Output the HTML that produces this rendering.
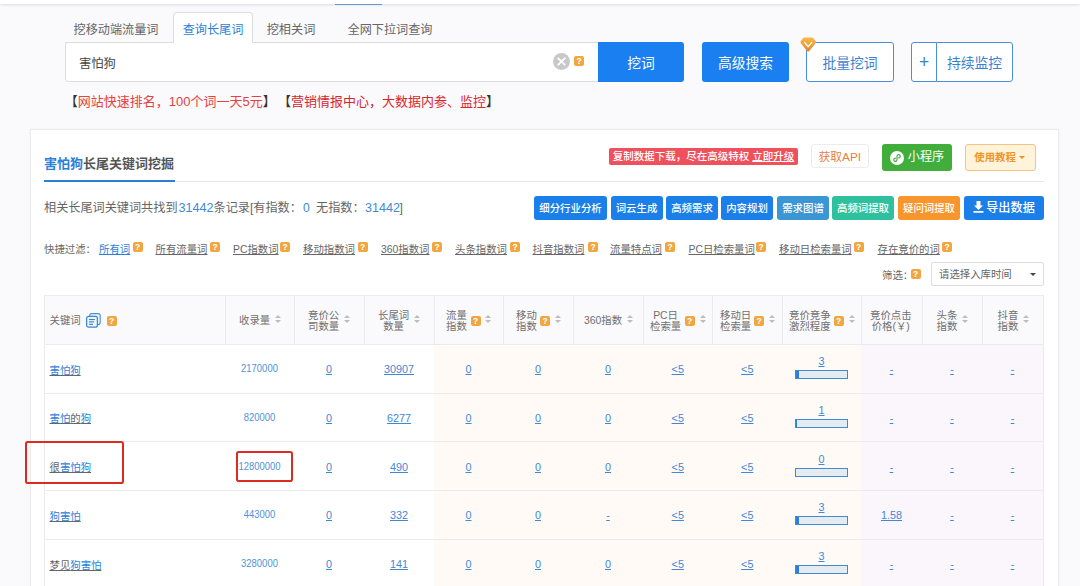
<!DOCTYPE html><html lang="zh-CN"><head><meta charset="utf-8"><title>害怕狗长尾关键词挖掘</title><style>
*{box-sizing:border-box;margin:0;padding:0}
html,body{width:1080px;height:586px;overflow:hidden;background:#faf9fb}
body{font-family:"Liberation Sans","Noto Sans CJK SC",sans-serif;color:#555;font-size:12.1px;position:relative}
.a{position:absolute;white-space:nowrap}
.c{text-align:center}
.q{position:absolute;width:10px;height:10px;border-radius:2px;background:#f1a640;color:#fff;font-size:8.5px;font-weight:bold;line-height:10px;text-align:center;font-family:"Liberation Sans",sans-serif}
.tab{position:absolute;top:12px;height:31px;line-height:36px;font-size:12.15px;color:#666;text-align:center}
.btn{position:absolute;border-radius:3px;text-align:center;white-space:nowrap}
.sb{position:absolute;top:196px;height:24px;line-height:25px;border-radius:3px;color:#fff;font-size:10.4px;text-align:center;font-weight:500}
.f{position:absolute;top:243px;height:13px;line-height:13px;font-size:10.4px;color:#666;text-decoration:underline}
.th{position:absolute;font-size:10.4px;line-height:11.5px;color:#707070;text-align:center}
.so{position:absolute;width:6.2px;height:8.9px;margin-left:.6px}
.so:before,.so:after{content:"";position:absolute;left:0;border-left:3.1px solid transparent;border-right:3.1px solid transparent}
.so:before{top:0;border-bottom:3.4px solid #bdbdbd}
.so:after{bottom:0;border-top:3.4px solid #bdbdbd}
.vl{position:absolute;top:295px;width:1px;background:#ebebeb}
.hl{position:absolute;left:44px;width:1000px;height:1px;background:#ebebeb}
.kw{position:absolute;left:49.5px;font-size:10.4px;line-height:14px;height:14px;color:#666;text-decoration:underline}
.kw b{font-weight:normal;color:#2b7fd9}
.n{position:absolute;font-size:10.8px;line-height:14px;height:14px;color:#3f88d4;text-align:center;text-decoration:underline;text-underline-offset:1.3px}
.n.nu{text-decoration:none;color:#4f93d8;font-size:10.7px;transform:scaleX(.885)}
.bar{position:absolute;left:795px;width:53px;height:9px;border:1px solid #3d8ad6;background:#e6ebf0}
.bar i{position:absolute;left:0;top:0;bottom:0;background:#2b7fd9}
.rb{position:absolute;border:2.4px solid #dc2b20;border-radius:2.8px}
</style></head><body>
<div class="a" style="left:0;top:0;width:1080px;height:4px;background:#fff;box-shadow:0 1px 3px rgba(0,0,0,.12)"></div>
<div class="a" style="left:335px;top:3.8px;width:46.5px;height:1.5px;background:#5f9ad8"></div>
<div class="a" style="left:65px;top:42px;width:533px;height:1px;background:#ddd"></div>
<div class="tab" style="left:65px;width:102px">挖移动端流量词</div>
<div class="tab" style="left:173px;width:80px;background:#fff;border:1px solid #ddd;border-bottom:none;border-radius:4px 4px 0 0;color:#2b7fd9;line-height:34px">查询长尾词</div>
<div class="tab" style="left:258px;width:66px">挖相关词</div>
<div class="tab" style="left:338px;width:104px">全网下拉词查询</div>
<div class="a" style="left:65px;top:42px;width:534px;height:40px;background:#fff;border:1px solid #ddd;border-radius:3px 0 0 3px"></div>
<div class="a" style="left:174px;top:42px;width:78px;height:1px;background:#fff"></div>
<div class="a" style="left:79px;top:53.5px;height:20px;line-height:20px;font-size:12.3px;color:#444">害怕狗</div>
<svg class="a" style="left:553.2px;top:52.5px" width="17" height="17" viewBox="0 0 16 16"><circle cx="8" cy="8" r="8" fill="#c8c8cb"/><path d="M5 5 L11 11 M11 5 L5 11" stroke="#fff" stroke-width="1.8" stroke-linecap="round"/></svg>
<div class="q" style="left:574px;top:56px">?</div>
<div class="btn" style="left:598px;top:42px;width:86px;height:40px;line-height:43px;background:#1a7ff0;color:#fff;font-size:13.8px;border-radius:0 3px 3px 0">挖词</div>
<div class="btn" style="left:702px;top:42px;width:87px;height:40px;line-height:43px;background:#1a7ff0;color:#fff;font-size:13.8px">高级搜索</div>
<div class="btn" style="left:806px;top:42px;width:88px;height:40px;line-height:41px;background:#fff;color:#3a82d0;border:1px solid #4a90d9;font-size:13.8px">批量挖词</div>
<div class="btn" style="left:911px;top:42px;width:26px;height:40px;line-height:38px;background:#fff;color:#3a82d0;border:1px solid #4a90d9;font-size:17.5px;font-weight:300;border-radius:3px 0 0 3px">+</div>
<div class="btn" style="left:936px;top:42px;width:77px;height:40px;line-height:41px;background:#fff;color:#3a82d0;border:1px solid #4a90d9;font-size:13.8px;border-radius:0 3px 3px 0">持续监控</div>
<svg class="a" style="left:800px;top:37px" width="16.4" height="15.2" viewBox="0 0 16.4 15.2"><defs><linearGradient id="dg" x1="0" y1="0" x2="0" y2="1"><stop offset="0" stop-color="#f6bb4c"/><stop offset="1" stop-color="#e67f24"/></linearGradient></defs><path d="M4.6 0.5 H11.8 Q12.8 0.5 13.4 1.3 L15.8 4.6 Q16.3 5.4 15.7 6.1 L9 14.3 Q8.2 15.1 7.4 14.3 L0.7 6.1 Q0.1 5.4 0.6 4.6 L3 1.3 Q3.6 0.5 4.6 0.5 Z" fill="url(#dg)"/><path d="M4.7 5.6 L8.2 9.8 L11.7 5.6" fill="none" stroke="#fff6da" stroke-width="1.5" stroke-linecap="round" stroke-linejoin="round"/></svg>
<div class="a" style="left:0;top:92.5px;height:18px;line-height:18px;font-size:13px;color:#e8413d"><span class="a" style="left:64.8px"><span style="color:#333">【</span>网站快速排名，100个词一天5元<span style="color:#333">】</span></span><span class="a" style="left:278px;color:#d9262c"><span style="color:#333">【</span>营销情报中心，大数据内参、监控<span style="color:#333">】</span></span></div>
<div class="a" style="left:30px;top:129px;width:1028.5px;height:470px;background:#fff;border:1.5px solid #ebebee;box-shadow:0 0 3px rgba(0,0,0,.04)"></div>
<div class="a" style="left:44px;top:155px;height:18px;line-height:18px;font-size:13px;font-weight:bold;color:#555"><span style="color:#2b7fd9">害怕狗</span>长尾关键词挖掘</div>
<div class="a" style="left:44px;top:181px;width:1000px;height:1px;background:#e6e6e6"></div>
<div class="a" style="left:44px;top:180px;width:131px;height:2px;background:#2b7fd9"></div>
<div class="a c" style="left:609px;top:148px;width:189px;height:17px;line-height:17px;background:#f0505c;border-radius:2px;color:#fff;font-size:10.5px;font-weight:500">复制数据下载，尽在高级特权 <span style="text-decoration:underline">立即升级</span></div>
<div class="btn" style="left:811px;top:143.6px;width:57.6px;height:24.8px;line-height:24.6px;background:#fff;border:1px solid #ececec;color:#e5823c;font-size:11.8px">获取API</div>
<div class="btn" style="left:882px;top:144px;width:70px;height:27px;line-height:27px;background:#41ae3c;color:#fff;font-size:12.15px;padding-left:18px">小程序</div>
<svg class="a" style="left:890px;top:150.7px" width="14" height="14" viewBox="0 0 13 13"><circle cx="6.5" cy="6.5" r="6.5" fill="#fff"/><path d="M6.5 8.2 V4.8 a1.5 1.5 0 1 1 1.5 1.5 M6.5 4.8 V8.2 a1.5 1.5 0 1 1 -1.5 -1.5" fill="none" stroke="#41ae3c" stroke-width="1.1" stroke-linecap="round"/></svg>
<div class="btn" style="left:965px;top:143.6px;width:70.6px;height:27.7px;line-height:26px;background:#fff3da;border:1.2px solid #f2c585;color:#ee962a;font-size:10.4px;font-weight:bold;padding-right:10.5px">使用教程</div>
<div class="a" style="left:1019.3px;top:156.2px;width:0;height:0;border-left:3.2px solid transparent;border-right:3.2px solid transparent;border-top:3.2px solid #e59528"></div>
<div class="a" style="left:0;top:199px;height:18px;line-height:18px;font-size:12.15px;color:#666"><span class="a" style="left:44px">相关长尾词关键词共找到</span><span class="a" style="left:178.5px;color:#3f88d4;font-size:12.6px">31442</span><span class="a" style="left:213.5px">条记录[有指数：</span><span class="a" style="left:303px;color:#3f88d4">0</span><span class="a" style="left:316px">无指数：</span><span class="a" style="left:365px;color:#3f88d4;font-size:12.6px">31442</span><span class="a" style="left:399.5px">]</span></div>
<div class="sb" style="left:534px;width:73px;background:#1a7fe8">细分行业分析</div>
<div class="sb" style="left:610.5px;width:52px;background:#1a7fe8">词云生成</div>
<div class="sb" style="left:666px;width:52px;background:#1a7fe8">高频需求</div>
<div class="sb" style="left:721px;width:52px;background:#1a7fe8">内容规划</div>
<div class="sb" style="left:777px;width:52px;background:#3b97d3">需求图谱</div>
<div class="sb" style="left:832px;width:62px;background:#2fc19e">高频词提取</div>
<div class="sb" style="left:898px;width:62px;background:#f8952c">疑问词提取</div>
<div class="sb" style="left:964px;width:80px;background:#1a7fe8;font-size:12.15px;padding-left:13px">导出数据</div>
<svg class="a" style="left:972.5px;top:201.3px" width="11" height="12" viewBox="0 0 11 12"><path d="M3.5 0 H7.5 V4.5 H10 L5.5 9 L1 4.5 H3.5 Z M0.5 10 H10.5 V11.8 H0.5 Z" fill="#fff"/></svg>
<div class="a" style="left:44px;top:243px;height:13px;line-height:13px;font-size:10.4px;color:#666">快捷过滤：</div>
<div class="f" style="left:99px;color:#2b7fd9">所有词</div>
<div class="q" style="left:132.5px;top:242px">?</div>
<div class="f" style="left:155.5px">所有流量词</div>
<div class="q" style="left:210px;top:242px">?</div>
<div class="f" style="left:233px">PC指数词</div>
<div class="q" style="left:280px;top:242px">?</div>
<div class="f" style="left:303px">移动指数词</div>
<div class="q" style="left:357.5px;top:242px">?</div>
<div class="f" style="left:381px">360指数词</div>
<div class="q" style="left:432px;top:242px">?</div>
<div class="f" style="left:455px">头条指数词</div>
<div class="q" style="left:510px;top:242px">?</div>
<div class="f" style="left:532.5px">抖音指数词</div>
<div class="q" style="left:588px;top:242px">?</div>
<div class="f" style="left:610px">流量特点词</div>
<div class="q" style="left:665px;top:242px">?</div>
<div class="f" style="left:688.5px">PC日检索量词</div>
<div class="q" style="left:756px;top:242px">?</div>
<div class="f" style="left:779px">移动日检索量词</div>
<div class="q" style="left:853.5px;top:242px">?</div>
<div class="f" style="left:877.5px">存在竞价的词</div>
<div class="q" style="left:942px;top:242px">?</div>
<div class="a" style="left:882px;top:269px;height:13px;line-height:13px;font-size:10.4px;color:#666">筛选：</div>
<div class="q" style="left:910.5px;top:269px">?</div>
<div class="a" style="left:931px;top:262px;width:113px;height:23.5px;background:#fff;border:1px solid #ddd;border-radius:2px;font-size:10.4px;line-height:23.5px;padding-left:7px;color:#666">请选择入库时间</div>
<div class="a" style="left:1029.5px;top:273px;width:0;height:0;border-left:3.3px solid transparent;border-right:3.3px solid transparent;border-top:3.5px solid #444"></div>
<div class="a" style="left:44px;top:295px;width:1000px;height:49px;background:#faf9fb"></div>
<div class="a" style="left:434px;top:344px;width:427px;height:260px;background:#fffaf5"></div>
<div class="a" style="left:861px;top:344px;width:183px;height:260px;background:#fbf6fc"></div>
<div class="hl" style="top:295px"></div>
<div class="hl" style="top:344px"></div>
<div class="hl" style="top:392.5px"></div>
<div class="hl" style="top:441px"></div>
<div class="hl" style="top:490px"></div>
<div class="hl" style="top:539px"></div>
<div class="vl" style="left:44px;height:300px"></div>
<div class="vl" style="left:225px;height:49px"></div>
<div class="vl" style="left:294px;height:49px"></div>
<div class="vl" style="left:364px;height:49px"></div>
<div class="vl" style="left:434px;height:49px"></div>
<div class="vl" style="left:503px;height:49px"></div>
<div class="vl" style="left:573px;height:49px"></div>
<div class="vl" style="left:643px;height:49px"></div>
<div class="vl" style="left:712px;height:49px"></div>
<div class="vl" style="left:782px;height:49px"></div>
<div class="vl" style="left:861px;height:49px"></div>
<div class="vl" style="left:922px;height:49px"></div>
<div class="vl" style="left:982px;height:49px"></div>
<div class="vl" style="left:1043px;height:300px"></div>
<div class="th" style="left:49.5px;top:315.4px;text-align:left">关键词</div>
<svg class="a" style="left:86px;top:313px" width="15" height="15" viewBox="0 0 15 15"><rect x="3.8" y="0.6" width="10.4" height="11" rx="2" fill="#e8f4fe" stroke="#4a8fd0" stroke-width="1.1"/><rect x="0.6" y="3.4" width="10.8" height="10.8" rx="2" fill="#e8f4fe" stroke="#3f86d0" stroke-width="1.2"/><path d="M3 6.6 H8.8 M3 8.9 H8 M3 11.3 H7" stroke="#3572b0" stroke-width="1"/></svg>
<div class="q" style="left:106.5px;top:315.5px">?</div>
<div class="th" style="left:239px;top:315.4px">收录量</div>
<div class="so" style="left:274px;top:314.5px"></div>
<div class="th" style="left:308px;top:309.65px">竞价公<br>司数量</div>
<div class="so" style="left:343.5px;top:314.5px"></div>
<div class="th" style="left:378px;top:309.65px">长尾词<br>数量</div>
<div class="so" style="left:413.5px;top:314.5px"></div>
<div class="th" style="left:446px;top:309.65px">流量<br>指数</div>
<div class="q" style="left:470.5px;top:315.5px">?</div>
<div class="so" style="left:484.5px;top:314.5px"></div>
<div class="th" style="left:516px;top:309.65px">移动<br>指数</div>
<div class="q" style="left:540px;top:315.5px">?</div>
<div class="so" style="left:554px;top:314.5px"></div>
<div class="th" style="left:584px;top:315.4px">360指数</div>
<div class="so" style="left:626px;top:314.5px"></div>
<div class="th" style="left:650px;top:309.65px">PC日<br>检索量</div>
<div class="q" style="left:684.5px;top:315.5px">?</div>
<div class="so" style="left:699.5px;top:314.5px"></div>
<div class="th" style="left:720px;top:309.65px">移动日<br>检索量</div>
<div class="q" style="left:754px;top:315.5px">?</div>
<div class="so" style="left:768.5px;top:314.5px"></div>
<div class="th" style="left:789px;top:309.65px">竞价竞争<br>激烈程度</div>
<div class="q" style="left:833.5px;top:315.5px">?</div>
<div class="so" style="left:848px;top:314.5px"></div>
<div class="th" style="left:870px;top:309.65px">竞价点击<br>价格(￥)</div>
<div class="th" style="left:936.5px;top:309.65px">头条<br>指数</div>
<div class="so" style="left:961px;top:314.5px"></div>
<div class="th" style="left:997.5px;top:309.65px">抖音<br>指数</div>
<div class="so" style="left:1022.5px;top:314.5px"></div>
<div class="kw" style="top:363.6px"><b>害怕狗</b></div>
<div class="n nu" style="left:225px;width:69px;top:361.2px">2170000</div>
<div class="n" style="left:294px;width:70px;top:362.2px">0</div>
<div class="n" style="left:364px;width:70px;top:362.2px">30907</div>
<div class="n" style="left:434px;width:69px;top:362.2px">0</div>
<div class="n" style="left:503px;width:70px;top:362.2px">0</div>
<div class="n" style="left:573px;width:70px;top:362.2px">0</div>
<div class="n" style="left:643px;width:69.5px;top:362.2px">&lt;5</div>
<div class="n" style="left:712.5px;width:69.5px;top:362.2px">&lt;5</div>
<div class="n" style="left:782px;width:79px;top:354.2px">3</div>
<div class="bar" style="top:370.0px"><i style="width:3px"></i></div>
<div class="n" style="left:861px;width:61px;top:362.2px">-</div>
<div class="n" style="left:922px;width:60px;top:362.2px">-</div>
<div class="n" style="left:982px;width:61px;top:362.2px">-</div>
<div class="kw" style="top:412.35px"><b>害怕</b>的<b>狗</b></div>
<div class="n nu" style="left:225px;width:69px;top:409.95px">820000</div>
<div class="n" style="left:294px;width:70px;top:410.95px">0</div>
<div class="n" style="left:364px;width:70px;top:410.95px">6277</div>
<div class="n" style="left:434px;width:69px;top:410.95px">0</div>
<div class="n" style="left:503px;width:70px;top:410.95px">0</div>
<div class="n" style="left:573px;width:70px;top:410.95px">0</div>
<div class="n" style="left:643px;width:69.5px;top:410.95px">&lt;5</div>
<div class="n" style="left:712.5px;width:69.5px;top:410.95px">&lt;5</div>
<div class="n" style="left:782px;width:79px;top:402.95px">1</div>
<div class="bar" style="top:418.75px"><i style="width:1px"></i></div>
<div class="n" style="left:861px;width:61px;top:410.95px">-</div>
<div class="n" style="left:922px;width:60px;top:410.95px">-</div>
<div class="n" style="left:982px;width:61px;top:410.95px">-</div>
<div class="kw" style="top:461.1px">很<b>害怕狗</b></div>
<div class="n nu" style="left:225px;width:69px;top:458.7px">12800000</div>
<div class="n" style="left:294px;width:70px;top:459.7px">0</div>
<div class="n" style="left:364px;width:70px;top:459.7px">490</div>
<div class="n" style="left:434px;width:69px;top:459.7px">0</div>
<div class="n" style="left:503px;width:70px;top:459.7px">0</div>
<div class="n" style="left:573px;width:70px;top:459.7px">0</div>
<div class="n" style="left:643px;width:69.5px;top:459.7px">&lt;5</div>
<div class="n" style="left:712.5px;width:69.5px;top:459.7px">&lt;5</div>
<div class="n" style="left:782px;width:79px;top:451.7px">0</div>
<div class="bar" style="top:467.5px"></div>
<div class="n" style="left:861px;width:61px;top:459.7px">-</div>
<div class="n" style="left:922px;width:60px;top:459.7px">-</div>
<div class="n" style="left:982px;width:61px;top:459.7px">-</div>
<div class="kw" style="top:509.85px"><b>狗害怕</b></div>
<div class="n nu" style="left:225px;width:69px;top:507.45000000000005px">443000</div>
<div class="n" style="left:294px;width:70px;top:508.45000000000005px">0</div>
<div class="n" style="left:364px;width:70px;top:508.45000000000005px">332</div>
<div class="n" style="left:434px;width:69px;top:508.45000000000005px">0</div>
<div class="n" style="left:503px;width:70px;top:508.45000000000005px">0</div>
<div class="n" style="left:573px;width:70px;top:508.45000000000005px">-</div>
<div class="n" style="left:643px;width:69.5px;top:508.45000000000005px">&lt;5</div>
<div class="n" style="left:712.5px;width:69.5px;top:508.45000000000005px">&lt;5</div>
<div class="n" style="left:782px;width:79px;top:500.45000000000005px">3</div>
<div class="bar" style="top:516.25px"><i style="width:3px"></i></div>
<div class="n" style="left:861px;width:61px;top:508.45000000000005px">1.58</div>
<div class="n" style="left:922px;width:60px;top:508.45000000000005px">-</div>
<div class="n" style="left:982px;width:61px;top:508.45000000000005px">-</div>
<div class="kw" style="top:558.6px">梦见<b>狗害怕</b></div>
<div class="n nu" style="left:225px;width:69px;top:556.2px">3280000</div>
<div class="n" style="left:294px;width:70px;top:557.2px">0</div>
<div class="n" style="left:364px;width:70px;top:557.2px">141</div>
<div class="n" style="left:434px;width:69px;top:557.2px">0</div>
<div class="n" style="left:503px;width:70px;top:557.2px">0</div>
<div class="n" style="left:573px;width:70px;top:557.2px">0</div>
<div class="n" style="left:643px;width:69.5px;top:557.2px">&lt;5</div>
<div class="n" style="left:712.5px;width:69.5px;top:557.2px">&lt;5</div>
<div class="n" style="left:782px;width:79px;top:549.2px">3</div>
<div class="bar" style="top:565.0px"><i style="width:3px"></i></div>
<div class="n" style="left:861px;width:61px;top:557.2px">-</div>
<div class="n" style="left:922px;width:60px;top:557.2px">-</div>
<div class="n" style="left:982px;width:61px;top:557.2px">-</div>
<div class="rb" style="left:25px;top:441px;width:98.7px;height:43px"></div>
<div class="rb" style="left:236px;top:451px;width:57px;height:30.6px"></div>
</body></html>
